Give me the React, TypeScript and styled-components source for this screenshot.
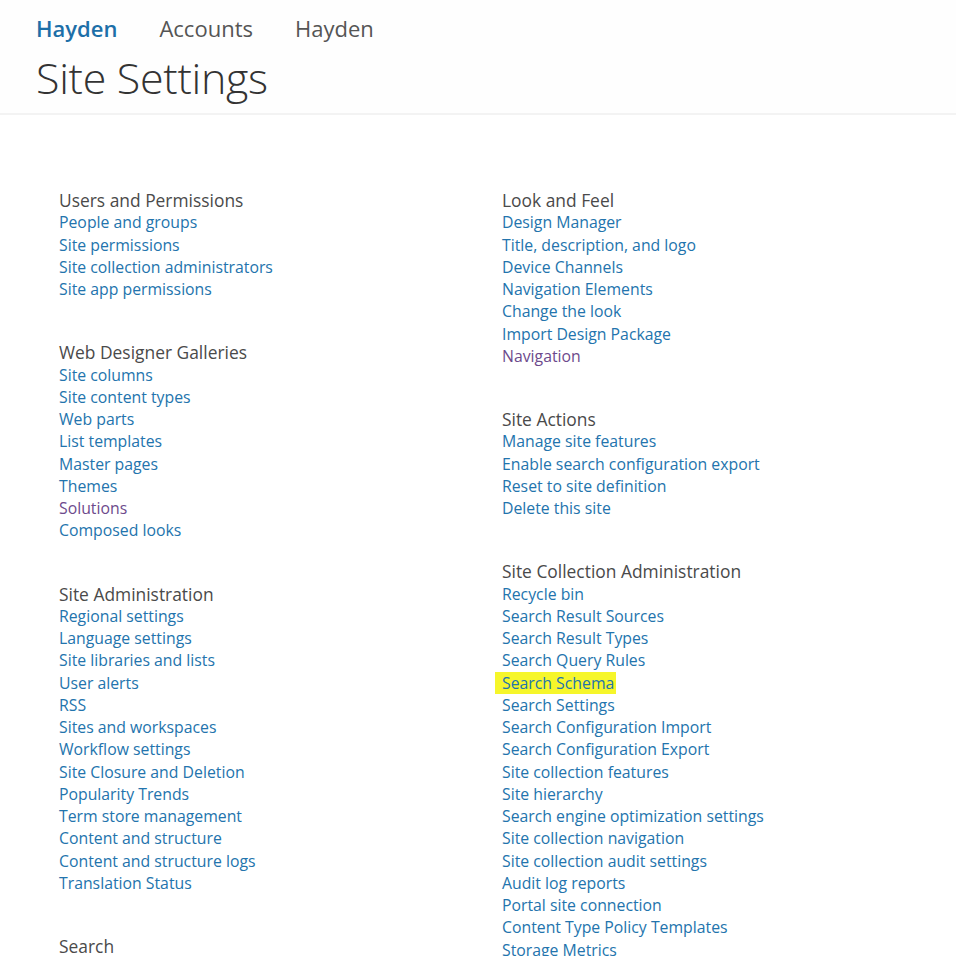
import React from "react";
import styled, { createGlobalStyle } from "styled-components";

const GlobalStyle = createGlobalStyle`
  body {
    margin: 0;
    background: #ffffff;
    font-family: "Open Sans", "Noto Sans", sans-serif;
  }
`;

const Page = styled.div`
  width: 956px;
  height: 956px;
  overflow: hidden;
  background: #ffffff;
`;

const Header = styled.header`
  padding: 12px 0 0 36px;
  height: 115px;
  box-sizing: border-box;
  background: #fefefe;
  border-bottom: 2px solid #f3f3f3;
`;

const Nav = styled.nav`
  display: flex;
  gap: 42px;
  height: 32px;
  align-items: center;
`;

const NavItem = styled.span<{ $active?: boolean }>`
  font-size: 22px;
  font-weight: ${(p) => (p.$active ? 600 : 400)};
  color: ${(p) => (p.$active ? "#1d6fa8" : "#555555")};
`;

const Title = styled.h1`
  margin: 0;
  font-size: 43px;
  font-weight: 300;
  color: #333333;
  line-height: 68px;
  letter-spacing: -0.3px;
`;

const Columns = styled.div`
  display: grid;
  grid-template-columns: 443px 1fr;
  padding: 74px 0 0 59px;
`;

const Column = styled.div`
  display: flex;
  flex-direction: column;
  gap: 41px;
`;

const Section = styled.section`
  display: flex;
  flex-direction: column;
`;

const SectionTitle = styled.h3`
  margin: 0;
  font-size: 17.4px;
  font-weight: 400;
  color: #4a4a4a;
  line-height: 22.25px;
`;

const Link = styled.a<{ $visited?: boolean; $marked?: boolean }>`
  align-self: flex-start;
  font-size: 15.8px;
  line-height: 22.25px;
  color: ${(p) => (p.$visited ? "#6d4a8c" : "#2374ad")};
  text-decoration: none;
  cursor: pointer;
  ${(p) =>
    p.$marked &&
    `
    background: #f6f62a;
    margin-left: -7px;
    padding: 0 2px 0 7px;
  `}
`;

type Item = { label: string; visited?: boolean; marked?: boolean };
type Group = { title: string; items: Item[] };

const left: Group[] = [
  {
    title: "Users and Permissions",
    items: [
      { label: "People and groups" },
      { label: "Site permissions" },
      { label: "Site collection administrators" },
      { label: "Site app permissions" },
    ],
  },
  {
    title: "Web Designer Galleries",
    items: [
      { label: "Site columns" },
      { label: "Site content types" },
      { label: "Web parts" },
      { label: "List templates" },
      { label: "Master pages" },
      { label: "Themes" },
      { label: "Solutions", visited: true },
      { label: "Composed looks" },
    ],
  },
  {
    title: "Site Administration",
    items: [
      { label: "Regional settings" },
      { label: "Language settings" },
      { label: "Site libraries and lists" },
      { label: "User alerts" },
      { label: "RSS" },
      { label: "Sites and workspaces" },
      { label: "Workflow settings" },
      { label: "Site Closure and Deletion" },
      { label: "Popularity Trends" },
      { label: "Term store management" },
      { label: "Content and structure" },
      { label: "Content and structure logs" },
      { label: "Translation Status" },
    ],
  },
  { title: "Search", items: [] },
];

const right: Group[] = [
  {
    title: "Look and Feel",
    items: [
      { label: "Design Manager" },
      { label: "Title, description, and logo" },
      { label: "Device Channels" },
      { label: "Navigation Elements" },
      { label: "Change the look" },
      { label: "Import Design Package" },
      { label: "Navigation", visited: true },
    ],
  },
  {
    title: "Site Actions",
    items: [
      { label: "Manage site features" },
      { label: "Enable search configuration export" },
      { label: "Reset to site definition" },
      { label: "Delete this site" },
    ],
  },
  {
    title: "Site Collection Administration",
    items: [
      { label: "Recycle bin" },
      { label: "Search Result Sources" },
      { label: "Search Result Types" },
      { label: "Search Query Rules" },
      { label: "Search Schema", marked: true },
      { label: "Search Settings" },
      { label: "Search Configuration Import" },
      { label: "Search Configuration Export" },
      { label: "Site collection features" },
      { label: "Site hierarchy" },
      { label: "Search engine optimization settings" },
      { label: "Site collection navigation" },
      { label: "Site collection audit settings" },
      { label: "Audit log reports" },
      { label: "Portal site connection" },
      { label: "Content Type Policy Templates" },
      { label: "Storage Metrics" },
    ],
  },
];

const renderColumn = (groups: Group[]) => (
  <Column>
    {groups.map((g) => (
      <Section key={g.title}>
        <SectionTitle>{g.title}</SectionTitle>
        {g.items.map((it) => (
          <Link key={it.label} $visited={it.visited} $marked={it.marked}>
            {it.label}
          </Link>
        ))}
      </Section>
    ))}
  </Column>
);

export default function App() {
  return (
    <Page>
      <GlobalStyle />
      <Header>
        <Nav>
          <NavItem $active>Hayden</NavItem>
          <NavItem>Accounts</NavItem>
          <NavItem>Hayden</NavItem>
        </Nav>
        <Title>Site Settings</Title>
      </Header>
      <Columns>
        {renderColumn(left)}
        {renderColumn(right)}
      </Columns>
    </Page>
  );
}
